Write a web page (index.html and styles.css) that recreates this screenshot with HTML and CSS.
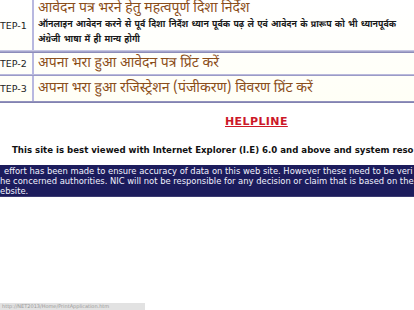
FILE: index.html
```html
<!DOCTYPE html>
<html>
<head>
<meta charset="utf-8">
<link rel="stylesheet" href="styles.css">
</head>
<body>
<div class="steps">
  <div class="row r1">
    <div class="lab">TEP-1</div>
    <div class="cnt">
      <div class="title">आवेदन पत्र भरने हेतु महत्वपूर्ण दिशा निर्देश</div>
      <div class="note">ऑनलाइन आवेदन करने से पूर्व दिशा निर्देश ध्यान पूर्वक पढ़ ले एवं आवेदन के प्रारूप को भी ध्यानपूर्वक</div>
      <div class="note">अंग्रेजी भाषा में ही मान्य होगी</div>
    </div>
  </div>
  <div class="sep"></div>
  <div class="row r2">
    <div class="lab">TEP-2</div>
    <div class="cnt"><div class="title">अपना भरा हुआ आवेदन पत्र प्रिंट करें</div></div>
  </div>
  <div class="sep thin"></div>
  <div class="row r3">
    <div class="lab">TEP-3</div>
    <div class="cnt"><div class="title">अपना भरा हुआ रजिस्ट्रेशन (पंजीकरण) विवरण प्रिंट करें</div></div>
  </div>
  <div class="sep bottom"></div>
</div>
<div class="help"><span class="helpline">HELPLINE</span></div>
<div class="best">This site is best viewed with Internet Explorer (I.E) 6.0 and above and system reso</div>
<div class="disc">
  <div class="dl l1">effort has been made to ensure accuracy of data on this web site. However these need to be veri</div>
  <div class="dl l2">he concerned authorities. NIC will not be responsible for any decision or claim that is based on the</div>
  <div class="dl l3">ebsite.</div>
</div>
<div class="status">http://NET2013/Home/PrintApplication.htm</div>
</body>
</html>
```
FILE: styles.css
```css
html, body {
  margin: 0;
  padding: 0;
  background: #ffffff;
  overflow: hidden;
  width: 414px;
  height: 310px;
}
body {
  font-family: "DejaVu Sans", Verdana, sans-serif;
  color: #111;
}
.steps {
  background: linear-gradient(#ffffff, #fffff6);
}
.row {
  display: grid;
  grid-template-columns: 32px 2px 1fr;
}
.row .lab {
  grid-column: 1;
  display: flex;
  align-items: center;
  font-size: 9.5px;
  color: #222;
  white-space: nowrap;
  overflow: hidden;
}
.row .cnt {
  grid-column: 3;
  border-left: 2px solid #b8b8e0;
  margin-left: -2px;
  padding-left: 4px;
  white-space: nowrap;
  overflow: hidden;
}
.r1 { height: 50px; }
.r2 { height: 21px; }
.r3 { height: 25px; }
.title {
  font-size: 14px;
  line-height: 18px;
  color: #8b4e1a;
  font-family: "Noto Sans Devanagari", "Lohit Devanagari", "Noto Sans", sans-serif;
}
.r2 .title { line-height: 21px; }
.r3 .title { line-height: 25px; }
.note {
  font-size: 8.8px;
  font-weight: bold;
  line-height: 15px;
  word-spacing: 1px;
  color: #1a1a1a;
  font-family: "Noto Sans Devanagari", "Lohit Devanagari", "Noto Sans", sans-serif;
}
.sep {
  height: 3px;
  background: linear-gradient(#d6d6ee, #a6a6cc, #7f7fb0);
}
.sep.thin {
  height: 2px;
  background: linear-gradient(#c8c8e6, #8c8cbc);
}
.sep.bottom {
  height: 2px;
  background: linear-gradient(#9a9ac4, #7a7aaa);
}
.help {
  padding: 7px 0 0 225px;
  height: 16px;
}
.helpline {
  font-size: 11px;
  font-weight: bold;
  color: #cc1828;
  text-decoration: underline;
  letter-spacing: 0.4px;
}
.best {
  margin-top: 19px;
  padding-left: 12px;
  font-size: 8.6px;
  font-weight: bold;
  white-space: nowrap;
  color: #111;
  line-height: 10px;
}
.disc {
  margin-top: 10px;
  background: #1c1c5c;
  height: 32px;
  padding-top: 1px;
  box-sizing: border-box;
  border-bottom: 1px solid #3a3a70;
}
.dl {
  color: #f2f2ff;
  font-size: 8.4px;
  line-height: 10px;
  white-space: nowrap;
}
.l1 { padding-left: 4px; }
.status {
  position: fixed;
  left: 0;
  bottom: 0;
  width: 145px;
  height: 7px;
  background: #e2e2e2;
  color: #9a9a9a;
  font-size: 5px;
  line-height: 7px;
  overflow: hidden;
  white-space: nowrap;
  padding-left: 2px;
  box-sizing: border-box;
}
```
